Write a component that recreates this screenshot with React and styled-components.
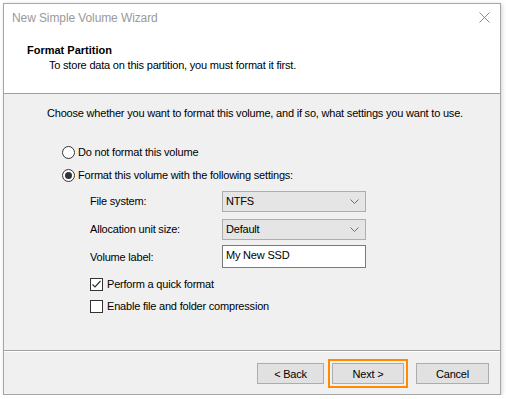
import React, { useState } from 'react';
import styled, { createGlobalStyle } from 'styled-components';

const GlobalStyle = createGlobalStyle`
  html, body {
    margin: 0;
    padding: 0;
    background: #ffffff;
  }
  body {
    font-family: "Liberation Sans", Arial, sans-serif;
    font-size: 11px;
    letter-spacing: -0.2px;
    color: #000;
  }
`;

const Janela = styled.div`
  margin: 3px 0 0 3px;
  width: 498px;
  height: 392px;
  box-sizing: border-box;
  border: 1px solid #a6a6a6;
  background: #f0f0f0;
  display: flex;
  flex-direction: column;
  box-shadow: 1px 1px 4px rgba(0, 0, 0, 0.18);
`;

const Topo = styled.div`
  background: #ffffff;
  height: 90px;
  box-sizing: border-box;
  border-bottom: 1px solid #a0a0a0;
`;

const BarraTitulo = styled.div`
  height: 27px;
  display: flex;
  align-items: center;
  justify-content: space-between;
  padding: 0 10px 0 8px;
  font-size: 12px;
  letter-spacing: -0.1px;
  color: #9a9a9a;
`;

const BotaoFechar = styled.div`
  width: 12px;
  height: 12px;
  display: flex;
  align-items: center;
  justify-content: center;
`;

const Cabecalho = styled.div`
  padding: 12px 0 0 23px;
  line-height: 15px;
`;

const TituloPasso = styled.div`
  font-weight: bold;
  letter-spacing: 0;
`;

const Subtitulo = styled.div`
  padding-left: 22px;
`;

const Corpo = styled.div`
  flex: 1;
  padding: 12px 0 0 43px;
  line-height: 15px;
`;

const Opcao = styled.label`
  display: flex;
  align-items: center;
  height: 15px;
  margin-top: ${(p) => p.$topo}px;
  margin-left: ${(p) => p.$recuo}px;
  gap: ${(p) => p.$espaco}px;
  cursor: default;
`;

const Radio = styled.span`
  width: 13px;
  height: 13px;
  box-sizing: border-box;
  border: 1px solid #333;
  border-radius: 50%;
  background: #fff;
  display: flex;
  align-items: center;
  justify-content: center;

  &::after {
    content: '';
    width: 7px;
    height: 7px;
    border-radius: 50%;
    background: ${(p) => (p.$marcado ? '#333' : 'transparent')};
  }
`;

const Caixa = styled.span`
  width: 13px;
  height: 13px;
  box-sizing: border-box;
  border: 1px solid #333;
  background: #fff;
  display: flex;
  align-items: center;
  justify-content: center;
`;

const Formulario = styled.div`
  margin: 8px 0 0 43px;
`;

const LinhaForm = styled.div`
  display: flex;
  align-items: center;
  height: ${(p) => p.$altura}px;
  margin-top: ${(p) => p.$topo || 0}px;
`;

const Rotulo = styled.div`
  width: 132px;
  padding-top: ${(p) => p.$desce || 0}px;
`;

const Combo = styled.div`
  display: flex;
  align-items: center;
  justify-content: space-between;
  box-sizing: border-box;
  width: 144px;
  height: 21px;
  border: 1px solid #adadad;
  background: #e5e5e5;
  padding: 0 6px 0 3px;
`;

const CampoTexto = styled.input`
  box-sizing: border-box;
  height: 23px;
  width: 144px;
  border: 1px solid #7a7a7a;
  background: #fff;
  padding: 0 3px 3px 3px;
  font: inherit;
  letter-spacing: inherit;
  color: #000;
  outline: none;
`;

const Rodape = styled.div`
  height: 44px;
  box-sizing: border-box;
  border-top: 1px solid #a0a0a0;
  box-shadow: inset 0 1px 0 #ffffff;
  display: flex;
  justify-content: flex-end;
  align-items: flex-start;
  padding: 8px 11px 0 0;
`;

const Botao = styled.button`
  box-sizing: border-box;
  height: 21px;
  width: ${(p) => p.$largura}px;
  margin-top: ${(p) => p.$topo || 0}px;
  margin-left: ${(p) => p.$esquerda || 0}px;
  border: 1px solid #adadad;
  background: #e1e1e1;
  font: inherit;
  letter-spacing: inherit;
  color: #000;
  padding: 0;
`;

const Foco = styled.div`
  border: 2px solid #ff8c00;
  padding: 2px;
  margin-left: 4px;
  display: flex;
`;

function Seta() {
  return (
    <svg width="9" height="5" viewBox="0 0 9 5">
      <path d="M0.5 0.5 L4.5 4.5 L8.5 0.5" fill="none" stroke="#6d6d6d" strokeWidth="1" />
    </svg>
  );
}

function Visto() {
  return (
    <svg width="11" height="11" viewBox="0 0 11 11">
      <path d="M1.5 5.5 L4 8 L9.5 2" fill="none" stroke="#333" strokeWidth="1.2" />
    </svg>
  );
}

export default function App() {
  const [formatar, setFormatar] = useState(true);
  const [rapido, setRapido] = useState(true);
  const [compactar, setCompactar] = useState(false);

  return (
    <>
      <GlobalStyle />
      <Janela>
        <Topo>
          <BarraTitulo>
            <span>New Simple Volume Wizard</span>
            <BotaoFechar>
              <svg width="11" height="11" viewBox="0 0 11 11">
                <path d="M0.5 0.5 L10.5 10.5 M10.5 0.5 L0.5 10.5" stroke="#8a8a8a" strokeWidth="1" />
              </svg>
            </BotaoFechar>
          </BarraTitulo>
          <Cabecalho>
            <TituloPasso>Format Partition</TituloPasso>
            <Subtitulo>To store data on this partition, you must format it first.</Subtitulo>
          </Cabecalho>
        </Topo>

        <Corpo>
          <div>Choose whether you want to format this volume, and if so, what settings you want to use.</div>

          <Opcao $topo={24} $recuo={15} $espaco={3} onClick={() => setFormatar(false)}>
            <Radio $marcado={!formatar} />
            Do not format this volume
          </Opcao>
          <Opcao $topo={8} $recuo={15} $espaco={3} onClick={() => setFormatar(true)}>
            <Radio $marcado={formatar} />
            Format this volume with the following settings:
          </Opcao>

          <Formulario>
            <LinhaForm $altura={21}>
              <Rotulo>File system:</Rotulo>
              <Combo>
                <span>NTFS</span>
                <Seta />
              </Combo>
            </LinhaForm>
            <LinhaForm $altura={21} $topo={7}>
              <Rotulo>Allocation unit size:</Rotulo>
              <Combo>
                <span>Default</span>
                <Seta />
              </Combo>
            </LinhaForm>
            <LinhaForm $altura={23} $topo={5}>
              <Rotulo $desce={2}>Volume label:</Rotulo>
              <CampoTexto defaultValue="My New SSD" />
            </LinhaForm>
          </Formulario>

          <Opcao $topo={9} $recuo={43} $espaco={4} onClick={() => setRapido(!rapido)}>
            <Caixa>{rapido && <Visto />}</Caixa>
            Perform a quick format
          </Opcao>
          <Opcao $topo={7} $recuo={43} $espaco={4} onClick={() => setCompactar(!compactar)}>
            <Caixa>{compactar && <Visto />}</Caixa>
            Enable file and folder compression
          </Opcao>
        </Corpo>

        <Rodape>
          <Botao $largura={67} $topo={4}>&lt; Back</Botao>
          <Foco>
            <Botao $largura={72}>Next &gt;</Botao>
          </Foco>
          <Botao $largura={73} $topo={4} $esquerda={8}>Cancel</Botao>
        </Rodape>
      </Janela>
    </>
  );
}
